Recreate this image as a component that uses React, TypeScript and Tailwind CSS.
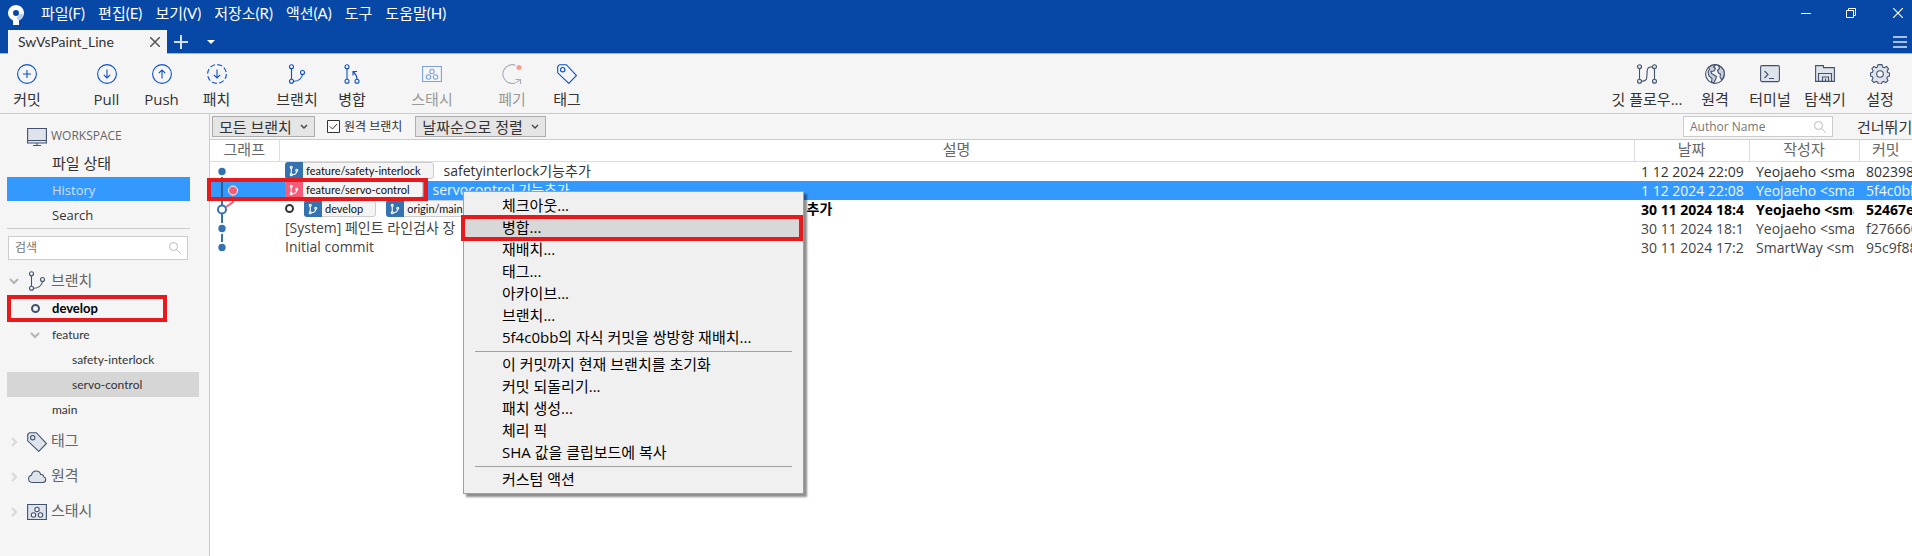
import type { ReactNode } from 'react';

const menus = ['파일(F)', '편집(E)', '보기(V)', '저장소(R)', '액션(A)', '도구', '도움말(H)'];

const contextGroups = [
  ['체크아웃...', '병합...', '재배치...', '태그...', '아카이브...', '브랜치...', '5f4c0bb의 자식 커밋을 쌍방향 재배치...'],
  ['이 커밋까지 현재 브랜치를 초기화', '커밋 되돌리기...', '패치 생성...', '체리 픽', 'SHA 값을 클립보드에 복사'],
  ['커스텀 액션'],
];

interface IconProps {
  children: ReactNode;
  className?: string;
}

const Icon: React.FC<IconProps> = ({ children, className = 'text-[#0b50c8]' }) => (
  <svg
    width="20"
    height="20"
    viewBox="0 0 20 20"
    fill="none"
    stroke="currentColor"
    strokeWidth="1.1"
    className={`shrink-0 ${className}`}
  >
    {children}
  </svg>
);

const BranchShape = () => (
  <>
    <circle cx="4.5" cy="2.7" r="2" />
    <circle cx="4.5" cy="17.3" r="2" />
    <circle cx="15.5" cy="8.5" r="2" />
    <path d="M4.5 4.7v10.6M6.5 17.3c5 0 8.5-3 9-6.8" />
  </>
);

const TagShape = () => (
  <>
    <path d="M.7 2.5 2.5.7h6.8l10.2 10.8-7.7 7.9L.7 8.8z" />
    <circle cx="5.7" cy="5.7" r="2.2" />
  </>
);

const StashShape = () => (
  <>
    <path d="M.6 2.5h18.8v15H.6z" />
    <circle cx="10" cy="7.5" r="2.2" fill="#f5f5f5" />
    <circle cx="6.5" cy="13" r="2.2" fill="#f5f5f5" />
    <circle cx="13.5" cy="13" r="2.2" fill="#f5f5f5" />
  </>
);

const Magnifier = () => (
  <svg width="12" height="12" viewBox="0 0 12 12" fill="none" stroke="#bbb" className="shrink-0">
    <circle cx="4.5" cy="4.5" r="4" />
    <path d="m7.5 7.5 4.2 4.2" />
  </svg>
);

const Chevron: React.FC<{ open?: boolean }> = ({ open }) => (
  <svg width="10" height="10" viewBox="0 0 10 10" fill="none" strokeWidth="2" stroke={open ? '#b4b4b4' : '#d8d8d8'} className="shrink-0">
    <path d={open ? 'm1 3 4 4 4-4' : 'm3 1 4 4-4 4'} />
  </svg>
);

interface ToolProps {
  label: string;
  width: string;
  disabled?: boolean;
  children: ReactNode;
}

const Tool: React.FC<ToolProps> = ({ label, width, disabled, children }) => (
  <button
    type="button"
    disabled={disabled}
    className={`flex shrink-0 flex-col items-center gap-[3px] pt-2.5 leading-6 ${width} ${
      disabled ? 'text-[#999]' : 'text-[#333]'
    }`}
  >
    {children}
    <span className="whitespace-nowrap">{label}</span>
  </button>
);

const Badge: React.FC<{ name: string; pink?: boolean }> = ({ name, pink }) => (
  <span className="flex h-[17px] shrink-0 items-center rounded-[3px] border border-[#ccc] bg-[#f4f4f4] pr-3 font-['Lato','Noto_Sans_CJK_KR',sans-serif] text-[11px] font-normal text-[#111]">
    <span className={`mr-[3px] -ml-px flex h-[17px] w-[18px] items-center justify-center rounded-l-[3px] ${pink ? 'bg-[#f45d78]' : 'bg-[#3572b0]'}`}>
      <svg width="10" height="12" viewBox="0 0 20 20" fill="none" stroke="#fff" strokeWidth="2.2">
        <BranchShape />
      </svg>
    </span>
    {name}
  </span>
);

const Graph: React.FC<{ row: number }> = ({ row }) => (
  <svg width="60" height="19" viewBox="0 0 60 19" fill="none" strokeWidth="2" className="block">
    {row === 0 && <path d="M12 15v4" stroke="#3572b0" />}
    {row === 1 && (
      <>
        <path d="M12 0v19" stroke="#2a5f9e" />
        <path d="M23 10v9" stroke="#f45d78" />
        <circle cx="23" cy="9.5" r="4.5" fill="#f45d78" stroke="#fff" strokeWidth="1" />
      </>
    )}
    {row === 2 && (
      <>
        <path d="M23 0v2l-7 5" stroke="#f45d78" />
        <path d="M12 0v5M12 14v5" stroke="#3572b0" />
        <circle cx="12" cy="9.5" r="4" fill="#fff" stroke="#3572b0" />
      </>
    )}
    {row === 3 && <path d="M12 0v4M12 15v4" stroke="#3572b0" />}
    {row === 4 && <path d="M12 0v4" stroke="#3572b0" />}
    {(row === 0 || row > 2) && <circle cx="12" cy="9.5" r="3.7" fill="#3572b0" />}
  </svg>
);

const Ring = () => <span className="size-[9px] shrink-0 rounded-full border-2 border-[#333]" />;

const commits: { badges?: ReactNode; text: string; date: string; author: string; hash: string }[] = [
  {
    badges: <Badge name="feature/safety-interlock" />,
    text: 'safetyinterlock기능추가',
    date: '1 12 2024 22:09',
    author: 'Yeojaeho <smartway>',
    hash: '8023984',
  },
  {
    badges: <Badge name="feature/servo-control" pink />,
    text: 'servocontrol 기능추가',
    date: '1 12 2024 22:08',
    author: 'Yeojaeho <smartway>',
    hash: '5f4c0bb',
  },
  {
    badges: (
      <>
        <Ring />
        <Badge name="develop" />
        <Badge name="origin/main" />
        <Badge name="origin/develop" />
        <Badge name="main" />
      </>
    ),
    text: '페인트 라인검사 신기능 추가',
    date: '30 11 2024 18:45',
    author: 'Yeojaeho <smartway>',
    hash: '52467ea',
  },
  { text: '[System] 페인트 라인검사 장', date: '30 11 2024 18:12', author: 'Yeojaeho <smartway>', hash: 'f276660' },
  { text: 'Initial commit', date: '30 11 2024 17:25', author: 'SmartWay <smartway>', hash: '95c9f88' },
];

const TitleBar = () => (
  <header className="bg-[#0747a6] text-white">
    <div className="flex h-[30px] items-center pb-1 pl-2">
      <svg width="16" height="21" viewBox="0 0 16 21" className="mt-1 mr-[17px] shrink-0">
        <path fill="#fff" fillRule="evenodd" d="M8 0a8 8 0 0 0-3 15.400V20h6v-4.600A8 8 0 0 0 8 0m0 5a3 3 0 1 1 0 6 3 3 0 0 1 0-6" />
        <path fill="#9fb9e4" d="m11 9.500 4.600-1A8 8 0 0 1 11 15.400l-2.500-1.900z" opacity=".7" />
      </svg>
      <nav className="flex gap-[13px] font-['Lato','Noto_Sans_CJK_KR',sans-serif]">
        {menus.map((m) => (
          <button type="button" key={m} className="whitespace-nowrap">
            {m}
          </button>
        ))}
      </nav>
      <div className="ml-auto flex items-center gap-[35px] pr-[9px]">
        <button type="button" aria-label="Minimize">
          <svg width="10" height="10" stroke="#fff" className="block"><path d="M0 5.500h10" /></svg>
        </button>
        <button type="button" aria-label="Restore">
          <svg width="12" height="10" fill="none" stroke="#fff" className="block"><path d="M.5 2.500h7v7h-7zM2.500 2V.5h7v7H8" /></svg>
        </button>
        <button type="button" aria-label="Close">
          <svg width="10" height="10" stroke="#fff" strokeWidth="1.2" className="block"><path d="m0 0 10 10M10 0 0 10" /></svg>
        </button>
      </div>
    </div>
    <div className="flex h-6 items-center border-b border-[#a6b4cc] pl-2">
      <div className="flex h-6 w-[159px] items-center justify-between bg-[#f5f5f5] pr-[7px] pl-2.5 text-[#333]">
        <span className="font-['Lato','Noto_Sans_CJK_KR',sans-serif] text-[14px]">SwVsPaint_Line</span>
        <button type="button" aria-label="Close tab">
          <svg width="10" height="10" stroke="#555" strokeWidth="1.5" className="block"><path d="m0 0 10 10M10 0 0 10" /></svg>
        </button>
      </div>
      <button type="button" aria-label="New tab" className="ml-[7px]">
        <svg width="14" height="14" stroke="#d5e0f2" strokeWidth="2" className="block"><path d="M7 0v14M0 7h14" /></svg>
      </button>
      <button type="button" aria-label="Tab list" className="ml-[19px]">
        <svg width="8" height="4" fill="#fff" className="block"><path d="M0 0h8L4 4z" /></svg>
      </button>
      <button type="button" aria-label="Menu" className="mr-[5px] ml-auto">
        <svg width="14" height="12" stroke="#a9c0e6" strokeWidth="2" className="block"><path d="M0 1h14M0 6h14M0 11h14" /></svg>
      </button>
    </div>
  </header>
);

const Toolbar = () => (
  <div className="flex h-[60px] items-start border-b border-[#ccc] bg-[#f5f5f5]">
    <Tool label="커밋" width="w-[54px]">
      <Icon><circle cx="10" cy="10" r="9.4" /><path d="M10 6v8M6 10h8" /></Icon>
    </Tool>
    <div className="w-[25px]" />
    <Tool label="Pull" width="w-[55px]">
      <Icon><circle cx="10" cy="10" r="9.4" /><path d="M10 5.500v8.500M6.800 10.800 10 14l3.200-3.200" /></Icon>
    </Tool>
    <Tool label="Push" width="w-[55px]">
      <Icon><circle cx="10" cy="10" r="9.4" /><path d="M10 14.500V6M6.800 9.200 10 6l3.200 3.200" /></Icon>
    </Tool>
    <Tool label="패치" width="w-[55px]">
      <Icon><circle cx="10" cy="10" r="9.4" strokeDasharray="5 2.38" /><path d="M10 5.500v8.500M6.800 10.800 10 14l3.200-3.200" /></Icon>
    </Tool>
    <div className="w-[26px]" />
    <Tool label="브랜치" width="w-[54px]">
      <Icon><BranchShape /></Icon>
    </Tool>
    <Tool label="병합" width="w-[56px]">
      <Icon>
        <circle cx="5" cy="2.7" r="2" /><circle cx="5" cy="17.3" r="2" /><circle cx="15" cy="17.3" r="2" />
        <path d="M5 4.700v10.600M15 15.300c0-3-1-5-3.500-7.300M11 11.500V7.500h4" />
      </Icon>
    </Tool>
    <div className="w-[26px]" />
    <Tool label="스태시" width="w-[52px]" disabled>
      <Icon className="text-[#7fa3dd]"><StashShape /></Icon>
    </Tool>
    <div className="w-[26px]" />
    <Tool label="폐기" width="w-[56px]" disabled>
      <Icon className="text-[#a5adba]">
        <path d="M13.500 1.200A9.400 9.400 0 1 0 18 15.500M13.500 15.500h5v4.500" />
        <circle cx="17" cy="3.5" r="2.5" fill="#ff9a8b" stroke="none" />
      </Icon>
    </Tool>
    <Tool label="태그" width="w-[54px]">
      <Icon><TagShape /></Icon>
    </Tool>
    <div className="ml-auto flex pr-1">
      <Tool label="깃 플로우..." width="w-[82px]">
        <Icon className="text-[#42526e]">
          <circle cx="2.5" cy="2.7" r="2" fill="#dfe3eb" /><circle cx="2.5" cy="17.3" r="2" fill="#dfe3eb" />
          <circle cx="17.5" cy="2.7" r="2" fill="#dfe3eb" /><circle cx="17.5" cy="17.3" r="2" fill="#dfe3eb" />
          <path d="M2.500 4.700v10.600M17.500 4.700v10.600M4.500 17.300c5.500 0 5.500-3 5.500-7.300s0-7.300 5.500-7.300" />
        </Icon>
      </Tool>
      <Tool label="원격" width="w-[54px]">
        <Icon className="text-[#42526e]">
          <circle cx="10" cy="10" r="9.4" fill="#f5f5f5" />
          <path fill="#c9d0dd" d="M11 .7 8.500 3l2 1.500L9 7 6 7.500l.5 2L9 11l2.500 1.500-1 3-2 3.500-2-1 .5-3.500-3-2.500L3 8 4.500 5 3.500 3.500 7 1.200zM13.500 1.500l1 3-2 2 1 2.500 2 1-.5 3 1.500 2.500 2-2.500.8-3-.5-4L16 3z" />
        </Icon>
      </Tool>
      <Tool label="터미널" width="w-[56px]">
        <Icon className="text-[#42526e]">
          <rect x=".6" y="1.6" width="18.8" height="16" rx="1.5" fill="#dfe3eb" />
          <path d="m4.500 7 3.500 3.500L4.500 14M9 14.500h5" />
        </Icon>
      </Tool>
      <Tool label="탐색기" width="w-[54px]">
        <Icon className="text-[#42526e]">
          <path fill="#dfe3eb" d="M.6 17.400V1.600h7.900v2h10.900v13.800z" />
          <path d="M3.500 17V9.500h13V17M7.500 17v-4h6v4M10.500 17v-2.500" />
        </Icon>
      </Tool>
      <Tool label="설정" width="w-[56px]">
        <Icon className="text-[#42526e]">
          <path
            fill="#dfe3eb"
            strokeLinejoin="round"
            d="M8 .6h4l.6 2.500 1.700.7 2.200-1.400 2 2.500-1.300 2.200.4 1.300 1.900.6v3l-2.100.7-.6 1.500 1.200 2.200-2.200 2.200-2.300-1.200-1.400.6-.7 2H8.400l-.7-2-1.500-.6-2.200 1.200L1.800 16.400 3 14.200l-.6-1.500-1.900-.7V9l2-.7.6-1.500L1.900 4.700 4 2.400l2.100 1.400 1.300-.7z"
          />
          <circle cx="10" cy="10" r="3.3" fill="#f5f5f5" />
        </Icon>
      </Tool>
    </div>
  </div>
);

const Sidebar = () => (
  <aside className="w-[210px] shrink-0 border-r border-[#ccc] bg-[#f5f5f5] text-sm text-[#333]">
    <h2 className="flex h-[37px] items-center gap-1 pt-1.5 pl-[27px] text-[#666]">
      <Icon className="text-[#42526e]">
        <path fill="#dfe3eb" d="M.6 2.500h18.800v14.500H.6zM.6 14.500h18.800M10 17v2.500M6 19.500h8" />
      </Icon>
      <span className="text-xs font-medium">WORKSPACE</span>
    </h2>
    <ul className="mr-[19px] ml-[7px]">
      <li className="flex h-[26px] items-center pl-[45px] text-[15px]"><a href="#status">파일 상태</a></li>
      <li className="flex h-6 items-center bg-[#3399ff] pt-0.5 pl-[45px] text-[13px] text-[#d5dfec]"><a href="#history">History</a></li>
      <li className="flex h-7 items-center border-b border-[#ccc] pt-0.5 pl-[45px] text-[13px]"><a href="#search">Search</a></li>
    </ul>
    <label className="mt-[7px] mr-[21px] ml-2 flex h-6 items-center border border-[#ccc] bg-white px-1.5">
      <input aria-label="검색" placeholder="검색" className="w-0 grow text-xs outline-none placeholder:text-[#767676]" />
      <Magnifier />
    </label>
    <h2 className="flex h-[34px] items-center gap-2 pt-2 pl-[9px] text-[15px] text-[#666]">
      <Chevron open />
      <Icon className="text-[#42526e]"><BranchShape /></Icon>
      <span className="-ml-1">브랜치</span>
    </h2>
    <ul className="mr-2.5 ml-[7px] font-['Lato','Noto_Sans_CJK_KR',sans-serif] text-[12px]">
      <li className="relative flex h-[29px] items-center pl-6 font-bold text-black">
        <span className="mr-3 size-[9px] rounded-full border-2 border-[#42526e]" />
        <span className="text-[13px]">develop</span>
        <span className="pointer-events-none absolute top-px left-0 h-[27px] w-40 border-4 border-[#e8191c]" />
      </li>
      <li className="flex h-6 items-center gap-3 pl-[23px]"><Chevron open />feature</li>
      <li className="flex h-[25px] items-center pl-[65px]">safety-interlock</li>
      <li className="flex h-[25px] items-center bg-[#d6d6d6] pl-[65px]">servo-control</li>
      <li className="flex h-[25px] items-center pl-[45px]">main</li>
    </ul>
    <div className="pt-0.5 text-[15px] text-[#666]">
      <h2 className="flex h-[35px] items-center gap-2 pl-[9px]">
        <Chevron />
        <Icon className="fill-[#dfe3eb] text-[#42526e]"><TagShape /></Icon>
        <span className="-mt-0.5 -ml-1">태그</span>
      </h2>
      <h2 className="flex h-[35px] items-center gap-2 pl-[9px]">
        <Chevron />
        <Icon className="text-[#42526e]">
          <path fill="#dfe3eb" d="M5 15.500a3.700 3.700 0 0 1-.5-7.300C5 5.500 7 4 9.200 4c2.400 0 4 1.500 4.500 3.500 2-.3 3 .8 3 2.200 1.500.4 2 1.500 2 2.800 0 1.800-1.200 3-3 3z" />
        </Icon>
        <span className="-mt-0.5 -ml-1">원격</span>
      </h2>
      <h2 className="flex h-[35px] items-center gap-2 pl-[9px]">
        <Chevron />
        <Icon className="fill-[#dfe3eb] text-[#42526e]"><StashShape /></Icon>
        <span className="-mt-0.5 -ml-1">스태시</span>
      </h2>
    </div>
  </aside>
);

const selectClass = 'h-[21px] appearance-none border border-[#adadad] bg-[#e5e5e5] pl-1.5 leading-5 outline-none';

const SelectArrow = () => (
  <svg width="8" height="6" viewBox="0 0 8 6" fill="none" stroke="#444" strokeWidth="1.4" className="pointer-events-none -ml-[15px]">
    <path d="m1 1 3 3 3-3" />
  </svg>
);

const FilterBar = () => (
  <div className="flex h-[26px] items-center border-b border-[#ccc] bg-[#f5f5f5] pl-0.5 text-[#333]">
    <div className="flex items-center">
      <select aria-label="브랜치" className={`${selectClass} w-[103px]`}>
        <option>모든 브랜치</option>
      </select>
      <SelectArrow />
    </div>
    <label className="ml-[19px] flex items-center gap-1 text-xs">
      <input type="checkbox" defaultChecked className="peer sr-only" />
      <svg width="13" height="13" viewBox="0 0 13 13" fill="#fff" stroke="#333">
        <path d="M.5.5h12v12H.5zM3 6.500 5.500 9l4.500-5" />
      </svg>
      원격 브랜치
    </label>
    <div className="ml-[13px] flex items-center">
      <select aria-label="정렬" className={`${selectClass} w-[131px]`}>
        <option>날짜순으로 정렬</option>
      </select>
      <SelectArrow />
    </div>
    <label className="mr-6 ml-auto flex h-[21px] w-[150px] items-center border border-[#ccc] bg-white px-1.5">
      <input aria-label="Author Name" placeholder="Author Name" className="w-0 grow text-xs outline-none placeholder:text-[#767676]" />
      <Magnifier />
    </label>
    <span className="w-[55px] shrink-0 overflow-hidden whitespace-nowrap">건너뛰기</span>
  </div>
);

const rowColors = ['text-[#333]', 'bg-[#3399ff] text-[#f0f6ff]', 'font-bold text-black', 'text-[#444]', 'text-[#444]'];

const CommitTable = () => (
  <table className="w-full table-fixed border-collapse whitespace-nowrap">
    <colgroup>
      <col className="w-[69px]" />
      <col />
      <col className="w-[115px]" />
      <col className="w-[110px]" />
      <col className="w-[53px]" />
    </colgroup>
    <thead className="text-[#666]">
      <tr className="h-[21px] border-b border-[#ddd]">
        {['그래프', '설명', '날짜', '작성자', '커밋'].map((h) => (
          <th key={h} className="border-r border-[#ddd] p-0 pb-0.5 leading-[18px] font-normal last:border-r-0">
            {h}
          </th>
        ))}
      </tr>
    </thead>
    <tbody className="text-[14px]">
      {commits.map((c, i) => (
        <tr key={c.hash} className={`h-[19px] leading-[19px] ${rowColors[i]}`}>
          <td className="p-0"><Graph row={i} /></td>
          <td className="overflow-hidden p-0">
            <div className="flex h-[19px] items-center gap-2.5 pb-px pl-1.5">
              {c.badges}
              {c.text}
            </div>
          </td>
          <td className="p-0 pr-[5px] pl-[7px]"><div className="overflow-hidden">{c.date}</div></td>
          <td className="p-0 pr-[5px] pl-[7px]"><div className="overflow-hidden">{c.author}</div></td>
          <td className="overflow-hidden p-0 pl-[7px]">{c.hash}</td>
        </tr>
      ))}
    </tbody>
  </table>
);

const ContextMenu = () => (
  <div className="absolute top-[77px] left-[253px] w-[341px] border border-[#a0a0a0] bg-[#f0f0f0] pt-[3px] pb-0.5 text-black shadow-[3px_3px_2px_rgba(0,0,0,0.45)]">
    {contextGroups.map((group, g) => (
      <div key={g}>
        {g > 0 && <hr className="mx-[11px] my-0.5 border-[#a0a0a0]" />}
        {group.map((item) => (
          <button
            type="button"
            key={item}
            className={`flex h-[22px] w-full items-center pb-0.5 pl-[38px] text-left ${item === '병합...' ? 'bg-[#d8d8d8]' : ''}`}
          >
            {item}
          </button>
        ))}
      </div>
    ))}
    <div className="pointer-events-none absolute top-[23px] -left-[3px] h-[26px] w-[342px] border-4 border-[#e8191c]" />
  </div>
);

export default function App() {
  return (
    <div className="flex min-h-screen flex-col overflow-hidden bg-white font-['Open_Sans','Noto_Sans_CJK_KR',sans-serif] text-[15px] leading-5">
      <TitleBar />
      <Toolbar />
      <div className="flex grow">
        <Sidebar />
        <main className="relative min-w-0 grow">
          <FilterBar />
          <CommitTable />
          <div className="pointer-events-none absolute top-16 -left-[3px] h-[23px] w-[221px] border-4 border-[#e8191c]" />
          <ContextMenu />
        </main>
      </div>
    </div>
  );
}
